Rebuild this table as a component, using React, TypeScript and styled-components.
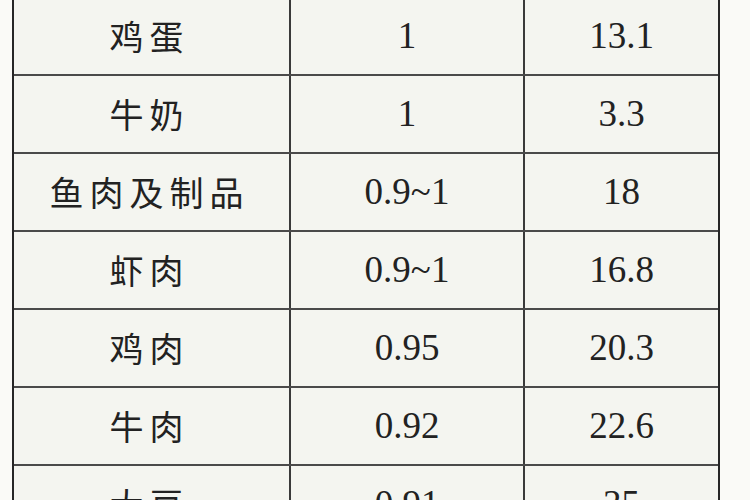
import { ReactElement } from 'react';
import styled, { createGlobalStyle } from 'styled-components';

type ProteinRow = {
  food: string;
  ratio: string;
  content: string;
};

const rows: ProteinRow[] = [
  { food: '鸡蛋', ratio: '1', content: '13.1' },
  { food: '牛奶', ratio: '1', content: '3.3' },
  { food: '鱼肉及制品', ratio: '0.9~1', content: '18' },
  { food: '虾肉', ratio: '0.9~1', content: '16.8' },
  { food: '鸡肉', ratio: '0.95', content: '20.3' },
  { food: '牛肉', ratio: '0.92', content: '22.6' },
  { food: '大豆', ratio: '0.91', content: '35' },
];

const GlobalStyle = createGlobalStyle`
  html, body {
    margin: 0;
    padding: 0;
    background: #fafaf7;
    overflow: hidden;
  }
`;

const Page = styled.div`
  width: 750px;
  height: 500px;
  overflow: hidden;
`;

const Table = styled.div`
  box-sizing: border-box;
  width: 708px;
  margin: -2px 0 0 12px;
  border-left: 2px solid #262626;
  border-right: 2px solid #262626;
  background: #f4f5f0;
`;

const Row = styled.div`
  box-sizing: border-box;
  display: grid;
  grid-template-columns: 277px 234px 1fr;
  height: 78px;
  border-bottom: 2px solid #4a4a4a;
`;

const Cell = styled.div<{ $last?: boolean }>`
  display: flex;
  align-items: center;
  justify-content: center;
  border-right: ${(p) => (p.$last ? 'none' : '2px solid #3a3a3a')};
  color: #222;
`;

const FoodName = styled.span`
  font-family: 'Noto Sans CJK SC', sans-serif;
  font-size: 34px;
  letter-spacing: 6px;
  font-weight: 400;
  line-height: 1;
  margin-left: -4px;
`;

const Number = styled.span`
  font-family: 'Liberation Serif', serif;
  font-size: 37px;
  line-height: 1;
  margin-top: -2px;
`;

export default function App(): ReactElement {
  return (
    <Page>
      <GlobalStyle />
      <Table>
        {rows.map((row) => (
          <Row key={row.food}>
            <Cell>
              <FoodName>{row.food}</FoodName>
            </Cell>
            <Cell>
              <Number>{row.ratio}</Number>
            </Cell>
            <Cell $last>
              <Number>{row.content}</Number>
            </Cell>
          </Row>
        ))}
      </Table>
    </Page>
  );
}
